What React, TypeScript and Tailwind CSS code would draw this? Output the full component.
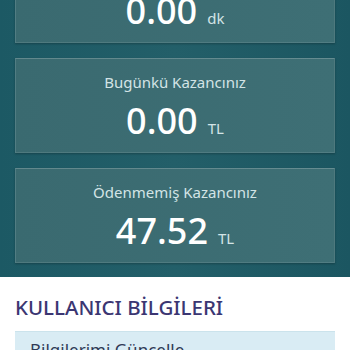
import React from "react";

const stats = [
  { label: "Bugünkü Çalışma Süreniz", value: "0.00", unit: "dk" },
  { label: "Bugünkü Kazancınız", value: "0.00", unit: "TL" },
  { label: "Ödenmemiş Kazancınız", value: "47.52", unit: "TL" },
];

export default function App() {
  return (
    <div
      className="min-h-screen bg-white overflow-hidden"
      style={{ fontFamily: '"Noto Sans", "Open Sans", sans-serif' }}
    >
      {/* Earnings summary */}
      <div className="-mt-[52px] bg-gradient-to-r from-[#1c5964] via-[#235f69] to-[#1b5661] px-[15px] pb-[14px]">
        <div className="flex flex-col gap-[15px]">
          {stats.map((s, i) => (
            <StatCard key={i} {...s} />
          ))}
        </div>
      </div>

      {/* User info */}
      <div className="px-[15px] pt-[16px]">
        <h2 className="text-[20.5px] font-medium text-[#3b3672] leading-[28px]">
          KULLANICI BİLGİLERİ
        </h2>
        <div className="mt-[10px] bg-[#d9ecf4] border-t border-[#cbe3ec] px-[15px] pt-[6px] pb-[10px]">
          <p className="text-[17px] text-[#2f3a56] leading-[24px]">Bilgilerimi Güncelle</p>
        </div>
      </div>
    </div>
  );
}

function StatCard({ label, value, unit }: { label: string; value: string; unit: string }) {
  return (
    <div className="h-[95px] bg-gradient-to-r from-[#3a6a70] to-[#3e6f75] border border-white/10 border-t-white/20 shadow-[0_1px_2px_rgba(0,0,0,0.25)] flex flex-col items-center pt-[12px]">
      <p className="text-[15px] text-[#d3e4e6] leading-[22px]">{label}</p>
      <p className="mt-[6px] leading-[44px] text-white">
        <span className="text-[36px] font-medium">{value}</span>
        <span className="ml-[10px] text-[15px] text-[#d3e4e6]">{unit}</span>
      </p>
    </div>
  );
}
